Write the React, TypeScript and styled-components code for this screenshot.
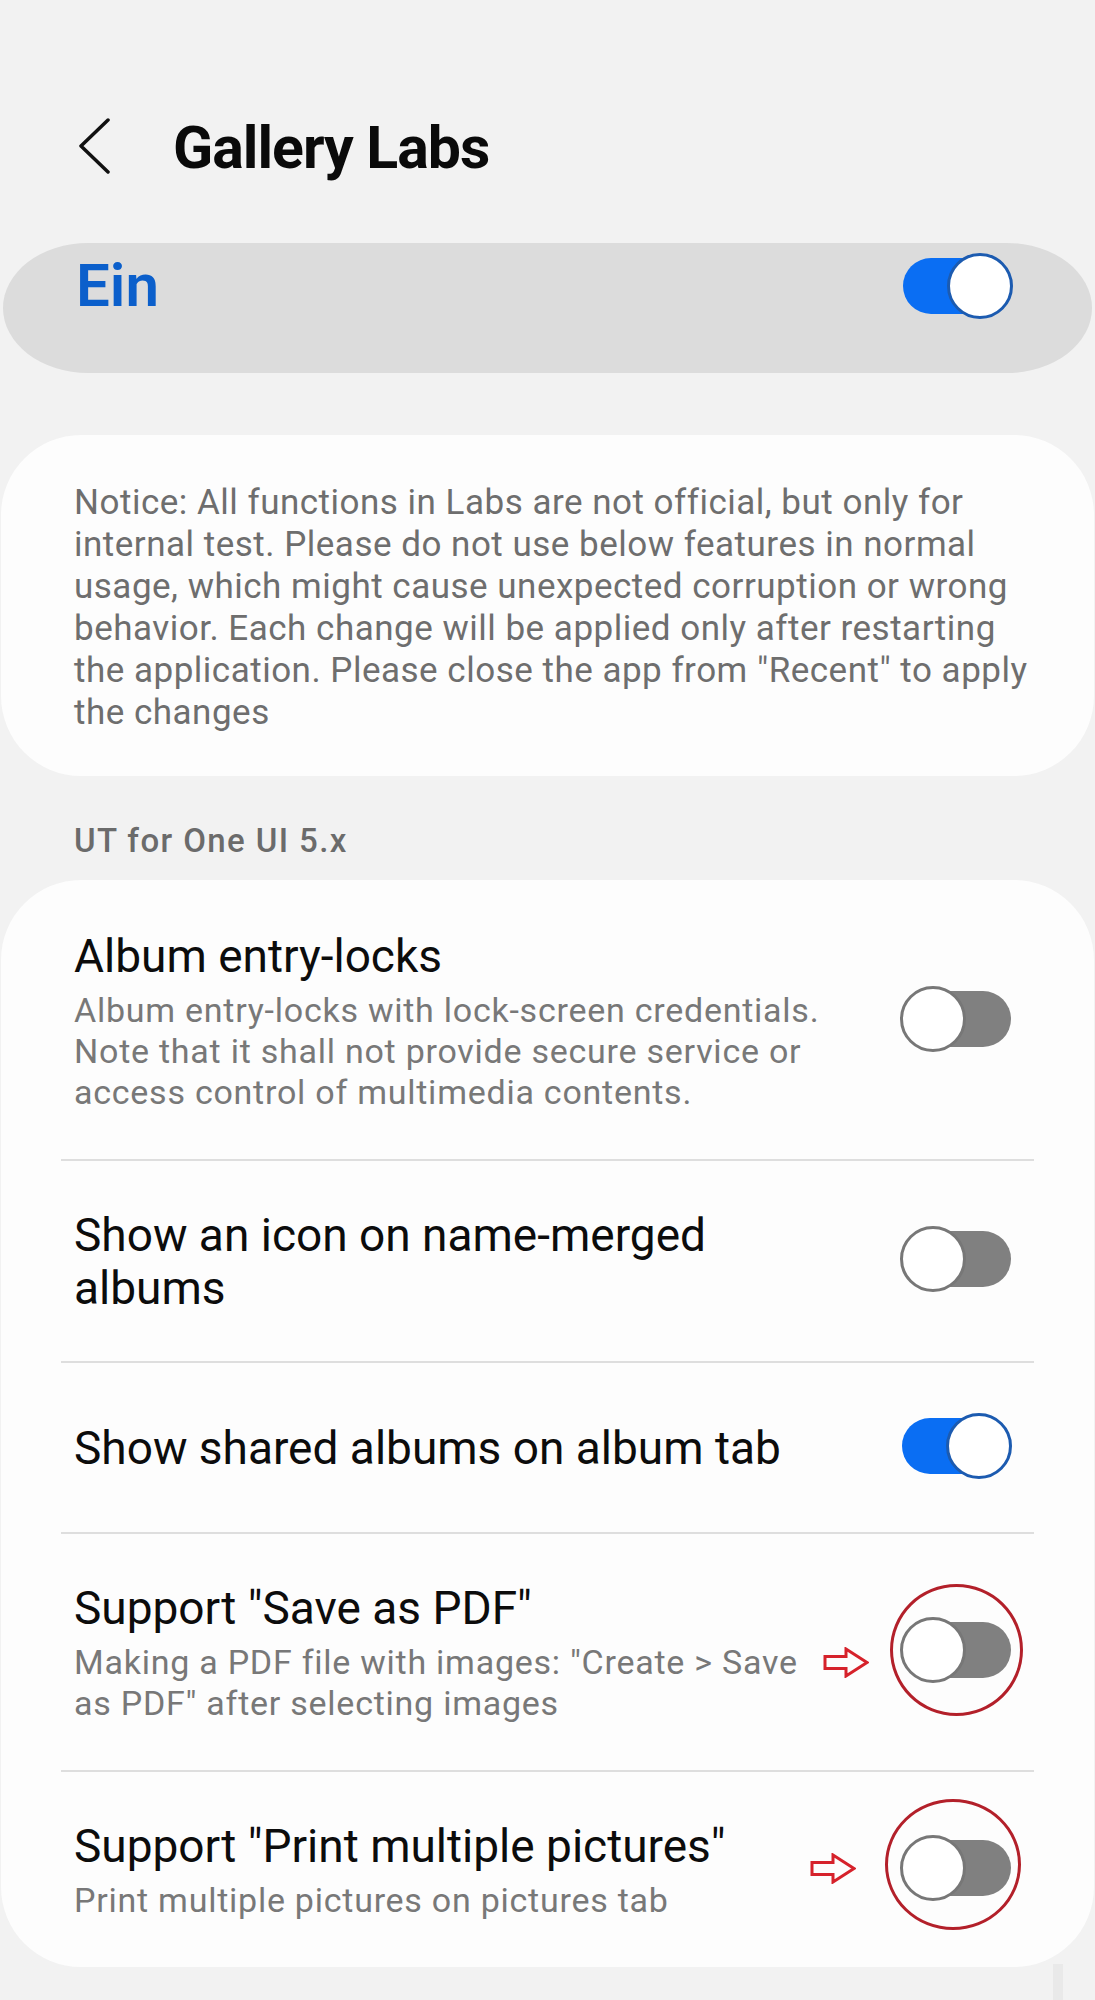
import React from 'react';
import styled, { createGlobalStyle } from 'styled-components';

const GlobalStyle = createGlobalStyle`
    body {
        margin: 0;
        background: #f2f2f2;
        font-family: Roboto, "Noto Sans", Arial, sans-serif;
    }
`;

type Item = {
    title: string;
    subtitle?: string;
    on?: boolean;
    mark?: { arrowX: number; arrowY: number; ringX: number; ringY: number; ringW: number; ringH: number };
};

const items: Item[] = [
    {
        title: 'Album entry-locks',
        subtitle:
            'Album entry-locks with lock-screen credentials. Note that it shall not provide secure service or access control of multimedia contents.',
    },
    { title: 'Show an icon on name-merged albums' },
    { title: 'Show shared albums on album tab', on: true },
    {
        title: 'Support "Save as PDF"',
        subtitle: 'Making a PDF file with images: "Create > Save as PDF" after selecting images',
        mark: { arrowX: 31, arrowY: 12, ringX: 0, ringY: 0, ringW: 133, ringH: 132 },
    },
    {
        title: 'Support "Print multiple pictures"',
        subtitle: 'Print multiple pictures on pictures tab',
        mark: { arrowX: 44, arrowY: 0, ringX: -3, ringY: -3, ringW: 136, ringH: 131 },
    },
];

const Toggle = ({ on }: { on?: boolean }) => (
    <Switch>
        <Track $on={on} />
        <Thumb $on={on} />
    </Switch>
);

const App = () => {
    return (
        <Page>
            <GlobalStyle />
            <Header>
                <BackIcon width="32" height="56" viewBox="0 0 32 56">
                    <polyline points="29,2 2,28 29,54" />
                </BackIcon>
                <Title>Gallery Labs</Title>
            </Header>

            <MasterPill>
                <MasterLabel>Ein</MasterLabel>
                <Toggle on />
            </MasterPill>

            <NoticeCard>
                Notice: All functions in Labs are not official, but only for internal test. Please do not use
                below features in normal usage, which might cause unexpected corruption or wrong behavior. Each
                change will be applied only after restarting the application. Please close the app from
                "Recent" to apply the changes
            </NoticeCard>

            <SectionLabel>UT for One UI 5.x</SectionLabel>

            <ListCard>
                {items.map((item) => (
                    <Row key={item.title}>
                        <RowText>
                            <RowTitle>{item.title}</RowTitle>
                            {item.subtitle && <RowSubtitle>{item.subtitle}</RowSubtitle>}
                        </RowText>
                        <ToggleSlot>
                            <Toggle on={item.on} />
                            {item.mark && (
                                <>
                                    <Ring
                                        style={{
                                            width: item.mark.ringW,
                                            height: item.mark.ringH,
                                            marginLeft: item.mark.ringX - item.mark.ringW / 2,
                                            marginTop: item.mark.ringY - item.mark.ringH / 2,
                                        }}
                                    />
                                    <Arrow
                                        width="46"
                                        height="31"
                                        viewBox="0 0 46 31"
                                        style={{ right: `calc(100% + ${item.mark.arrowX}px)`, marginTop: item.mark.arrowY - 15 }}
                                    >
                                        <path d="M2,9.5 H23 V2 L44,15.5 L23,29 V21.5 H2 Z" />
                                    </Arrow>
                                </>
                            )}
                        </ToggleSlot>
                    </Row>
                ))}
            </ListCard>
            <ScrollHint />
        </Page>
    );
};

export default App;

// Styled Components
const Page = styled.div`
    position: relative;
    width: 1095px;
    min-height: 2000px;
    background: #f2f2f2;
    overflow: hidden;
`;

const Header = styled.div`
    display: flex;
    align-items: center;
    height: 92px;
    margin-top: 100px;
    padding-left: 79px;
    gap: 62px;
`;

const BackIcon = styled.svg`
    fill: none;
    stroke: #111;
    stroke-width: 3.5;
    stroke-linecap: round;
    stroke-linejoin: round;
`;

const Title = styled.h1`
    margin: 2px 0 0;
    font-size: 59px;
    line-height: 1;
    font-weight: 700;
    letter-spacing: -1px;
    color: #0a0a0a;
`;

const MasterPill = styled.div`
    display: flex;
    align-items: center;
    justify-content: space-between;
    box-sizing: border-box;
    height: 130px;
    margin: 51px 3px 0;
    padding: 9px 79px 53px 73px;
    border-radius: 85px / 65px;
    background: #dcdcdc;
`;

const MasterLabel = styled.div`
    font-size: 60px;
    line-height: 1;
    font-weight: 600;
    color: #0b5fcb;
`;

const NoticeCard = styled.div`
    margin: 62px 1px 0;
    padding: 47px 60px 42px 73px;
    border-radius: 80px;
    background: #fdfdfd;
    font-size: 35px;
    line-height: 42px;
    letter-spacing: 0.5px;
    color: #6e6e6e;
`;

const SectionLabel = styled.div`
    margin: 45px 0 19px;
    padding-left: 74px;
    font-size: 33px;
    line-height: 40px;
    font-weight: 500;
    letter-spacing: 1.4px;
    color: #6b6b6b;
`;

const ListCard = styled.div`
    margin: 0 1px;
    padding: 2px 60px 0;
    border-radius: 80px;
    background: #fdfdfd;
`;

const Row = styled.div`
    display: flex;
    align-items: center;
    gap: 66px;
    box-sizing: border-box;
    min-height: 171px;
    padding: 48px 22px 46px 13px;
    border-bottom: 2px solid #dedede;

    &:last-child {
        border-bottom: none;
    }
`;

const RowText = styled.div`
    flex: 1;
    min-width: 0;
`;

const RowTitle = styled.div`
    font-size: 46px;
    line-height: 53px;
    color: #0c0c0c;
`;

const RowSubtitle = styled.div`
    margin-top: 7px;
    font-size: 34px;
    line-height: 41px;
    letter-spacing: 0.75px;
    color: #787878;
`;

const ToggleSlot = styled.div`
    position: relative;
    display: flex;
    margin-top: -6px;
`;

const Switch = styled.div`
    position: relative;
    width: 112px;
    height: 66px;
    flex-shrink: 0;
`;

const Track = styled.div<{ $on?: boolean }>`
    position: absolute;
    top: 5px;
    bottom: 5px;
    left: ${({ $on }) => ($on ? '2px' : '4px')};
    right: ${({ $on }) => ($on ? '4px' : '1px')};
    border-radius: 28px;
    background: ${({ $on }) => ($on ? '#0a6ef3' : '#808080')};
`;

const Thumb = styled.div<{ $on?: boolean }>`
    position: absolute;
    top: 0;
    left: ${({ $on }) => ($on ? '46px' : '0')};
    width: 66px;
    height: 66px;
    box-sizing: border-box;
    border-radius: 50%;
    border: 3px solid ${({ $on }) => ($on ? '#1c5bb0' : '#777777')};
    background: #ffffff;
`;

const Ring = styled.div`
    position: absolute;
    left: 50%;
    top: 50%;
    box-sizing: border-box;
    border: 3px solid #b3202a;
    border-radius: 50%;
    pointer-events: none;
`;

const Arrow = styled.svg`
    position: absolute;
    top: 50%;
    fill: none;
    stroke: #d6222b;
    stroke-width: 3;
    stroke-linejoin: miter;
`;

const ScrollHint = styled.div`
    position: absolute;
    left: 1053px;
    top: 1964px;
    width: 10px;
    height: 36px;
    background: #e9e9e9;
`;
